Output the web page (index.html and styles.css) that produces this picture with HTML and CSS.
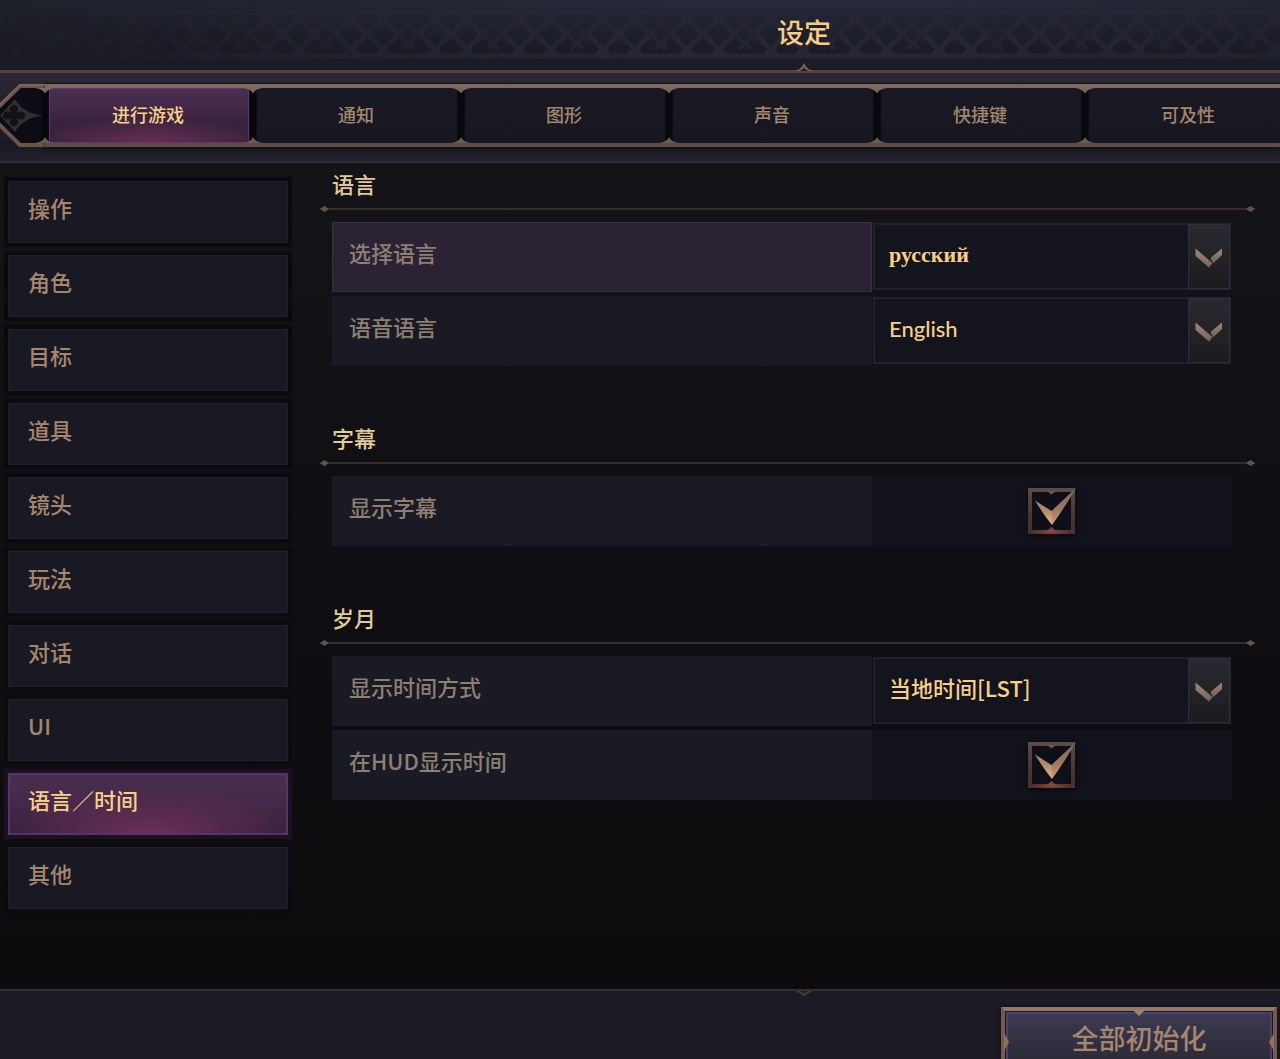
FILE: index.html
```html
<!DOCTYPE html>
<html lang="zh-CN">
<head>
    <meta charset="UTF-8">
    <meta name="viewport" content="width=device-width, initial-scale=1.0">
    <title>设定</title>
    <link rel="stylesheet" href="styles.css">
</head>
<body>
    <!-- Shared shapes -->
    <svg class="defs" width="0" height="0" aria-hidden="true">
        <defs>
            <linearGradient id="bronze" x1="0" y1="0" x2="0" y2="1">
                <stop offset="0" stop-color="#8a7060"/>
                <stop offset="0.6" stop-color="#b08a6e"/>
                <stop offset="1" stop-color="#eeb582"/>
            </linearGradient>
            <linearGradient id="frame" x1="0" y1="0" x2="0" y2="1">
                <stop offset="0" stop-color="#5c4c47"/>
                <stop offset="0.7" stop-color="#43342f"/>
                <stop offset="1" stop-color="#4e302c"/>
            </linearGradient>
            <linearGradient id="chevron" x1="0" y1="0" x2="0" y2="1">
                <stop offset="0" stop-color="#a18778"/>
                <stop offset="1" stop-color="#75625a"/>
            </linearGradient>
            <radialGradient id="ember">
                <stop offset="0" stop-color="#8c4a40"/>
                <stop offset="1" stop-color="#8c4a40" stop-opacity="0"/>
            </radialGradient>
            <symbol id="arrow" viewBox="0 0 28 20">
                <path d="M0.500 0.500 L17.500 15 L14 19.500 L0.500 8 Z" fill="url(#chevron)"/>
                <path d="M27 0.500 V7 L18.500 15 L16 11.500 V9.500 Z" fill="url(#chevron)"/>
            </symbol>
            <symbol id="check" viewBox="0 0 50 50">
                <rect x="3" y="4" width="43" height="43" fill="#0e0f18"/>
                <path d="M1 2 H48 V48 H1 Z M5 6 V44 H44 V6 Z" fill="url(#frame)" fill-rule="evenodd"/>
                <path d="M20 5 H29 L24.500 8.500 Z" fill="#6d5a50"/>
                <path d="M20 45 H29 L24.500 41 Z" fill="#7a453c"/>
                <ellipse cx="24.500" cy="46" rx="20" ry="3" fill="url(#ember)"/>
                <path d="M8 14.500 L24.500 25 L49 2 Q36 24 25 39 Q16 28 8 14.500 Z" fill="url(#bronze)"/>
                <path d="M24.500 25 L49 2 Q36 24 25 39 Z" fill="#5a4030" opacity="0.200"/>
            </symbol>
            <symbol id="joint" viewBox="0 0 22 55">
                <path d="M8 0 H14 V55 H8 Z" fill="#06060b"/>
                <path d="M1 0 H21 Q13 1 11 5.500 Q9 1 1 0 Z" fill="#7d685c"/>
                <path d="M1 55 H21 Q13 54 11 49 Q9 54 1 55 Z" fill="#6d5b50"/>
            </symbol>
            <pattern id="lattice" x="73" y="8" width="84" height="52" patternUnits="userSpaceOnUse">
                <rect width="84" height="52" fill="#1a1c26" opacity="0.300"/>
                <g fill="none" stroke="#262536" stroke-width="5">
                    <path d="M0 4 H84 M0 48 H84"/>
                    <path d="M19 4 L65 48 M65 4 L19 48"/>
                    <path d="M51 4 L74 26 L51 48"/>
                    <path d="M33 4 L10 26 L33 48"/>
                </g>
                <g fill="none" stroke="#232333" stroke-width="4">
                    <path d="M74 26 L90 11 M74 26 L90 41 M-10 26 L6 11 M-10 26 L6 41"/>
                    <path d="M10 26 L-6 11 M10 26 L-6 41 M94 26 L78 11 M94 26 L78 41"/>
                </g>
            </pattern>
        </defs>
    </svg>

    <div class="app">
        <header class="header">
            <svg class="header-pattern" width="100%" height="70" aria-hidden="true">
                <rect y="8" width="100%" height="52" fill="url(#lattice)"/>
            </svg>
            <h1>设定</h1>
            <svg class="notch notch-top" width="20" height="8" viewBox="0 0 20 8" aria-hidden="true">
                <path d="M0 8 Q7 7 10 0 Q13 7 20 8 Z" fill="#7a5f54"/>
                <path d="M5 8 Q9 7 10 4 Q11 7 15 8 Z" fill="#1f202b"/>
            </svg>
        </header>

        <nav class="tab-strip">
            <svg class="tab-cap" width="45" height="63" viewBox="0 0 45 63" aria-hidden="true">
                <path d="M45 2 H20 L-10 31.500 L20 61 H45" fill="#0b0c14" stroke="#6c544a" stroke-width="4"/>
                <path d="M45 1 H20 L0 20" fill="none" stroke="#92776a" stroke-width="1"/>
                <path d="M0 31.500 L15 15 Q23 30 45 31.500 Q23 33 15 48 Z" fill="#332d2f"/>
                <g fill="#11121a">
                    <circle cx="14" cy="25" r="4"/>
                    <circle cx="14" cy="38" r="4"/>
                    <circle cx="7" cy="31.500" r="4"/>
                    <circle cx="21" cy="31.500" r="4"/>
                    <rect x="10" y="28" width="8" height="7"/>
                </g>
            </svg>
            <div class="tabs">
                <button class="tab active">进行游戏</button>
                <button class="tab">通知</button>
                <button class="tab">图形</button>
                <button class="tab">声音</button>
                <button class="tab">快捷键</button>
                <button class="tab">可及性</button>
                <svg class="joints" width="100%" height="55" aria-hidden="true">
                    <use href="#joint" x="-11" width="22" height="55"/>
                    <use href="#joint" x="197" width="22" height="55"/>
                    <use href="#joint" x="405" width="22" height="55"/>
                    <use href="#joint" x="613" width="22" height="55"/>
                    <use href="#joint" x="821" width="22" height="55"/>
                    <use href="#joint" x="1029" width="22" height="55"/>
                </svg>
            </div>
        </nav>

        <div class="body">
            <nav class="sidebar">
                <button class="side-item">操作</button>
                <button class="side-item">角色</button>
                <button class="side-item">目标</button>
                <button class="side-item">道具</button>
                <button class="side-item">镜头</button>
                <button class="side-item">玩法</button>
                <button class="side-item">对话</button>
                <button class="side-item">UI</button>
                <button class="side-item active">语言／时间</button>
                <button class="side-item">其他</button>
            </nav>

            <main class="content">
                <section class="group">
                    <h2>语言</h2>
                    <div class="rule"></div>
                    <div class="rows">
                        <div class="row selected">
                            <label class="row-label" for="textLang">选择语言</label>
                            <div class="select">
                                <select id="textLang" class="serif">
                                    <option>русский</option>
                                </select>
                                <span class="select-arrow"><svg width="28" height="20" aria-hidden="true"><use href="#arrow"/></svg></span>
                            </div>
                        </div>
                        <div class="row">
                            <label class="row-label" for="voiceLang">语音语言</label>
                            <div class="select">
                                <select id="voiceLang" class="latin">
                                    <option>English</option>
                                </select>
                                <span class="select-arrow"><svg width="28" height="20" aria-hidden="true"><use href="#arrow"/></svg></span>
                            </div>
                        </div>
                    </div>
                </section>

                <section class="group">
                    <h2>字幕</h2>
                    <div class="rule"></div>
                    <div class="rows">
                        <div class="row">
                            <label class="row-label" for="subtitles">显示字幕</label>
                            <div class="check">
                                <input type="checkbox" id="subtitles" checked>
                                <svg width="50" height="50" aria-hidden="true"><use href="#check"/></svg>
                            </div>
                        </div>
                    </div>
                </section>

                <section class="group">
                    <h2>岁月</h2>
                    <div class="rule"></div>
                    <div class="rows">
                        <div class="row">
                            <label class="row-label" for="timeMode">显示时间方式</label>
                            <div class="select">
                                <select id="timeMode">
                                    <option>当地时间[LST]</option>
                                </select>
                                <span class="select-arrow"><svg width="28" height="20" aria-hidden="true"><use href="#arrow"/></svg></span>
                            </div>
                        </div>
                        <div class="row">
                            <label class="row-label" for="hudTime">在HUD显示时间</label>
                            <div class="check">
                                <input type="checkbox" id="hudTime" checked>
                                <svg width="50" height="50" aria-hidden="true"><use href="#check"/></svg>
                            </div>
                        </div>
                    </div>
                </section>
            </main>
        </div>

        <footer class="footer">
            <svg class="notch notch-bottom" width="20" height="8" viewBox="0 0 20 8" aria-hidden="true">
                <path d="M3 0 Q7 1 10 4 Q13 1 17 0" fill="none" stroke="#463a38" stroke-width="2"/>
            </svg>
            <button class="reset">
                全部初始化
                <svg class="reset-gem" width="12" height="6" viewBox="0 0 12 6" aria-hidden="true"><path d="M0 0 H12 L6 6 Z" fill="#a08470"/></svg>
                <svg class="reset-side left" width="5" height="18" viewBox="0 0 5 18" aria-hidden="true"><path d="M0 0 L5 9 L0 18 Z" fill="#92705e"/></svg>
                <svg class="reset-side right" width="5" height="18" viewBox="0 0 5 18" aria-hidden="true"><path d="M5 0 L0 9 L5 18 Z" fill="#92705e"/></svg>
            </button>
        </footer>
    </div>
</body>
</html>
```

FILE: styles.css
```css
* {
    box-sizing: border-box;
}
body {
    margin: 0;
    background-color: #0f0f13;
    color: #a5866e;
    font-family: "Noto Sans CJK SC", sans-serif;
    font-size: 22px;
    font-weight: 500;
}
button, select {
    font-family: inherit;
    font-size: inherit;
    font-weight: inherit;
    color: inherit;
    cursor: pointer;
}
h1, h2 {
    margin: 0;
    font-weight: 500;
}
.defs {
    position: absolute;
}
.app {
    display: flex;
    flex-direction: column;
    height: 100vh;
    overflow: hidden;
}

/* Header */
.header {
    position: relative;
    padding: 12px 0 18px 328px;
    border-bottom: 3px solid #54423b;
    background: radial-gradient(ellipse 800px 50px at 804px 0, #282c3b, #282c3b00), linear-gradient(#1e202a, #1a1b24);
    text-align: center;
}
.header-pattern {
    position: absolute;
    top: 0;
    left: 0;
    mask-image: linear-gradient(90deg, transparent, #0008 25%, #000 50%, #000 75%, #0008);
}
.header h1 {
    position: relative;
    color: #f5cd85;
    font-size: 27px;
    line-height: 40px;
}
.notch {
    position: absolute;
    left: calc(50% + 164px);
    margin-left: -10px;
}
.notch-top {
    bottom: -1px;
}
.notch-bottom {
    top: 0;
}

/* Tabs */
.tab-strip {
    display: flex;
    padding: 11px 0 14px;
    border-bottom: 2px solid #302d35;
    background: linear-gradient(#292834, #22222d 40%, #191a21 80%, #21212c);
    box-shadow: 0 2px 2px #08080b;
    overflow: hidden;
}
.tab-cap {
    flex: none;
}
.tabs {
    position: relative;
    display: flex;
    flex: 1;
    min-width: 0;
    height: 63px;
    border-top: 4px solid #80675b;
    border-bottom: 4px solid #5e4c45;
    background-color: #0b0b13;
    box-shadow: 0 -1px 1px #14141b, 0 2px 3px #14141a;
}
.tab {
    flex: none;
    width: 208px;
    padding: 0 2px 4px 0;
    border: solid #0b0b13;
    border-width: 0 4px;
    background: linear-gradient(#181923, #171721);
    font-size: 18px;
}
.tab.active {
    background: radial-gradient(ellipse 60% 45% at 50% 100%, #6a2e55, #6a2e5500), linear-gradient(#4b2f51, #38233f 65%, #35203c);
    box-shadow: inset 0 0 0 1px #583578;
    color: #f9cf88;
}
.joints {
    position: absolute;
    top: 0;
    left: 0;
    overflow: visible;
    pointer-events: none;
}

/* Body */
.body {
    display: flex;
    flex: 1;
    gap: 28px;
    min-height: 0;
    background: linear-gradient(#131318, #0f0f13 50%, #0c0c0f);
}
.sidebar {
    display: flex;
    flex-direction: column;
    flex: none;
    gap: 4px;
    width: 292px;
    padding: 14px 0 0 4px;
}
.side-item {
    flex: none;
    height: 70px;
    padding: 0 20px 10px;
    border: 4px solid #0a0a0f;
    background-color: #181923;
    box-shadow: inset 0 0 0 1px #1e202b;
    text-align: left;
}
.side-item.active {
    border-color: #1c1022;
    background: radial-gradient(ellipse 55% 70% at 50% 100%, #702f59, #702f5900) padding-box, linear-gradient(#482e4d, #46294a 50%, #321f3b) padding-box;
    box-shadow: inset 0 0 0 2px #55346c;
    color: #f9cf88;
}
.content {
    flex: 1;
    min-width: 0;
    padding: 4px 25px 0 0;
}
.group {
    padding-bottom: 55px;
}
.group h2 {
    padding-left: 12px;
    color: #e2c998;
    font-size: 22px;
    line-height: 32px;
}
.rule {
    position: relative;
    height: 2px;
    margin: 9px 0 12px;
    background-color: #352d28;
}
.rule::before,
.rule::after {
    content: "";
    position: absolute;
    top: -2px;
    left: 0;
    width: 9px;
    height: 6px;
    background-color: #62534a;
    clip-path: polygon(0 50%, 50% 0, 100% 50%, 50% 100%);
}
.rule::after {
    left: auto;
    right: 0;
}
.rows {
    display: flex;
    flex-direction: column;
    gap: 4px;
    padding: 0 23px 0 12px;
}
.row {
    display: grid;
    grid-template-columns: 3fr 2fr;
    height: 70px;
}
.row-label {
    display: flex;
    align-items: center;
    padding: 0 17px 10px;
    background-color: #191a24;
    color: #8d7f72;
}
.row.selected .row-label {
    background-color: #2b2333;
    box-shadow: inset 0 0 0 1px #393040;
}
.select {
    position: relative;
    margin: 1px 1px 2px;
}
.select select {
    appearance: none;
    width: 100%;
    height: 100%;
    padding: 0 60px 8px 14px;
    border: 2px solid #20212b;
    border-radius: 0;
    background-color: #13141d;
    color: #f9cf88;
}
.select .serif {
    padding-bottom: 4px;
    font-family: "Liberation Serif", serif;
    font-weight: bold;
}
.select .latin {
    padding-bottom: 4px;
    font-family: Lato, sans-serif;
}
.select-arrow {
    position: absolute;
    top: 1px;
    right: 1px;
    bottom: 1px;
    display: flex;
    align-items: center;
    justify-content: center;
    width: 42px;
    padding-top: 3px;
    border: 1px solid #2d2e37;
    background: linear-gradient(#292a30, #1c1b1f);
    pointer-events: none;
}
.check {
    display: grid;
    place-items: center;
    background-color: #11121b;
}
.check input,
.check svg {
    grid-area: 1 / 1;
}
.check input {
    appearance: none;
    width: 46px;
    height: 46px;
    margin: 0;
    box-shadow: 0 1px 4px #050508;
}
.check svg {
    pointer-events: none;
}

/* Footer */
.footer {
    position: relative;
    display: flex;
    justify-content: flex-end;
    flex: none;
    height: 70px;
    padding: 16px 3px 0;
    border-top: 2px solid #362c2b;
    background-color: #1c1a24;
    overflow: hidden;
}
.reset {
    position: relative;
    flex: none;
    width: 276px;
    height: 68px;
    padding: 0 0 8px;
    border: 4px solid #8c7262;
    border-color: #927868 #75594c;
    background: linear-gradient(#3c3b52, #282732);
    box-shadow: inset 0 0 0 1px #1a1a26, inset 0 0 0 3px #46446a, 0 0 4px #0b0b10;
    font-size: 27px;
}
.reset-gem {
    position: absolute;
    top: -1px;
    left: calc(50% - 6px);
}
.reset-side {
    position: absolute;
    top: 22px;
}
.reset-side.left {
    left: -1px;
}
.reset-side.right {
    right: -1px;
}
```
